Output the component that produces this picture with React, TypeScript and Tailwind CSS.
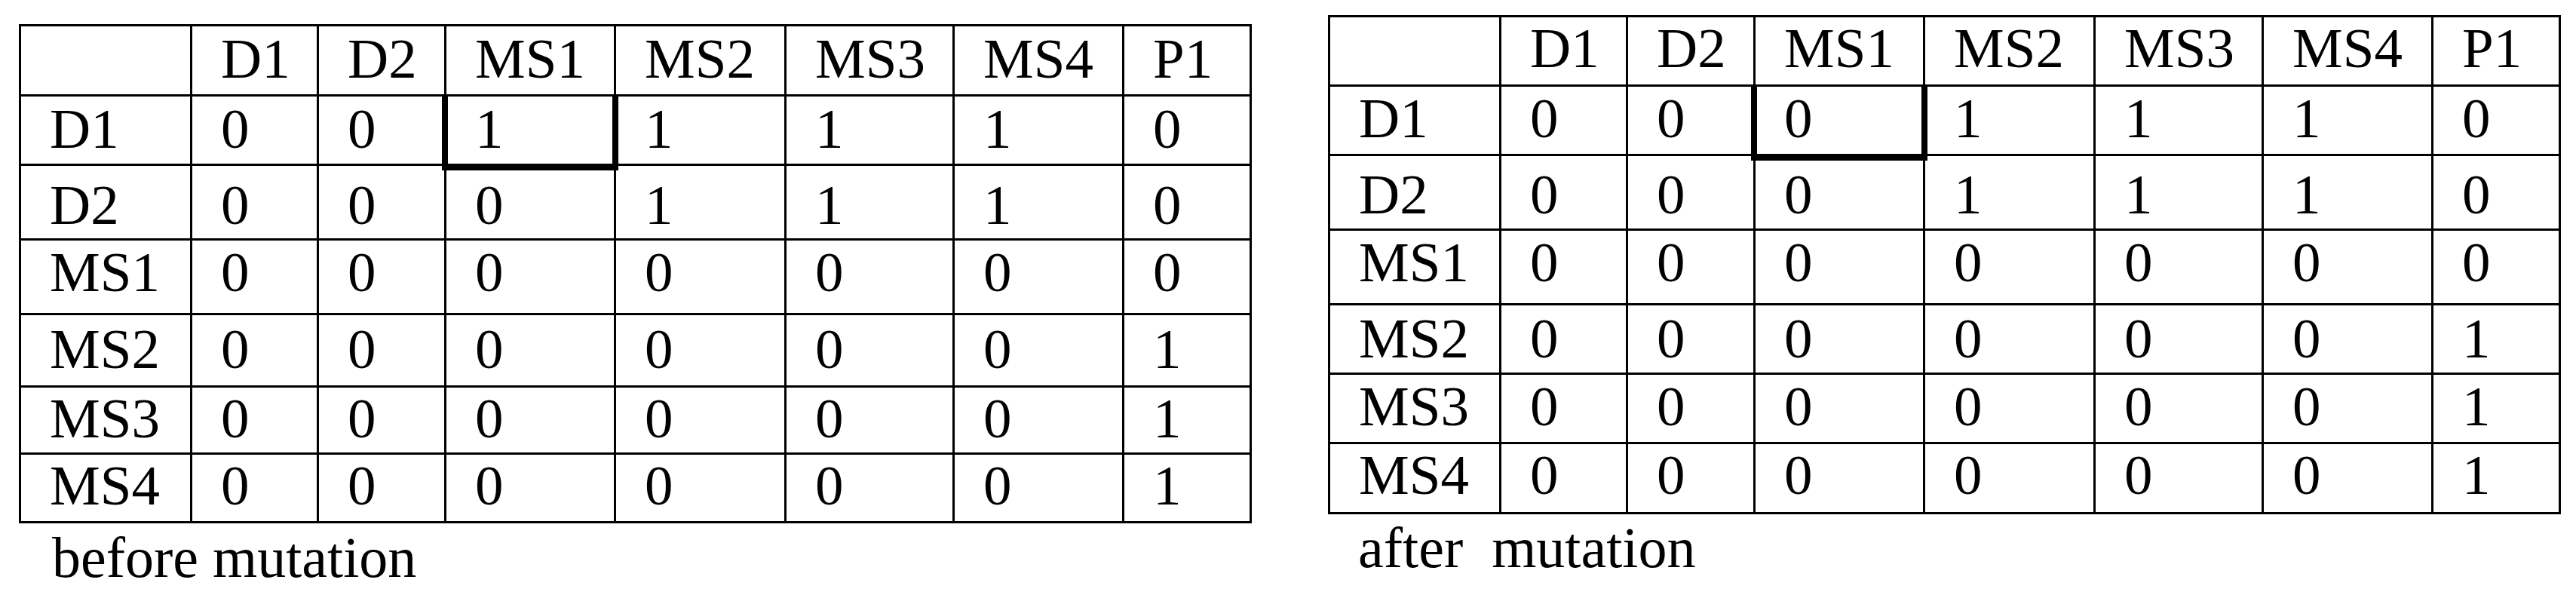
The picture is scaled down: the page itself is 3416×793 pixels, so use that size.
const header = ["", "D1", "D2", "MS1", "MS2", "MS3", "MS4", "P1"];
const rowLabels = ["D1", "D2", "MS1", "MS2", "MS3", "MS4"];

const before = [
  [0, 0, 1, 1, 1, 1, 0],
  [0, 0, 0, 1, 1, 1, 0],
  [0, 0, 0, 0, 0, 0, 0],
  [0, 0, 0, 0, 0, 0, 1],
  [0, 0, 0, 0, 0, 0, 1],
  [0, 0, 0, 0, 0, 0, 1],
];

const after = before.map((r, i) => (i === 0 ? [0, 0, 0, 1, 1, 1, 0] : r));

// per-row top padding so baselines line up with the scan
const leftPads = ["pt-[5px]", "pt-[5px]", "pt-[14px]", "pt-[4px]", "pt-[7px]", "pt-[3px]", "pt-[3px]"];
const rightPads = ["pt-[3px]", "pt-[4px]", "pt-[13px]", "pt-[4px]", "pt-[6px]", "pt-[4px]", "pt-[3px]"];

interface MatrixProps {
  data: number[][];
  rowsClass: string;
  pads: string[];
}

const Matrix = ({ data, rowsClass, pads }: MatrixProps) => {
  const rows = [header, ...data.map((r, i) => [rowLabels[i], ...r.map(String)])];

  return (
    <div
      className={`grid grid-cols-[227px_168px_169px_225px_226px_223px_225px_169px] ${rowsClass} border-l-[3px] border-t-[3px] border-black`}
    >
      {rows.map((row, ri) =>
        row.map((cell, ci) => {
          const marked = ri === 1 && ci === 3;
          return (
            <div
              key={`${ri}-${ci}`}
              className={`border-r-[3px] border-b-[3px] border-black pl-[38px] ${pads[ri]} ${marked ? "relative" : ""}`}
            >
              {cell}
              {marked && (
                <div className="absolute z-10 -left-[6px] -right-[6px] -top-[3px] -bottom-[9px] border-x-[8px] border-b-[9px] border-black" />
              )}
            </div>
          );
        })
      )}
    </div>
  );
};

export default function App() {
  return (
    <div className="flex items-start w-[3416px] h-[793px] overflow-hidden bg-white pl-[25px] text-black font-['Liberation_Serif',serif] text-[75px] leading-[75px]">
      <div className="mt-[32px]">
        <Matrix data={before} rowsClass="grid-rows-[93px_92px_99px_99px_96px_89px_91px]" pads={leftPads} />
        <div className="pl-[44px] mt-[7px] text-[76px] leading-[76px]">before mutation</div>
      </div>

      <div className="ml-[101px] mt-[20px]">
        <Matrix data={after} rowsClass="grid-rows-[92px_92px_99px_99px_92px_92px_93px]" pads={rightPads} />
        <div className="pl-[40px] mt-[6px] text-[76px] leading-[76px] whitespace-pre">after  mutation</div>
      </div>
    </div>
  );
}
